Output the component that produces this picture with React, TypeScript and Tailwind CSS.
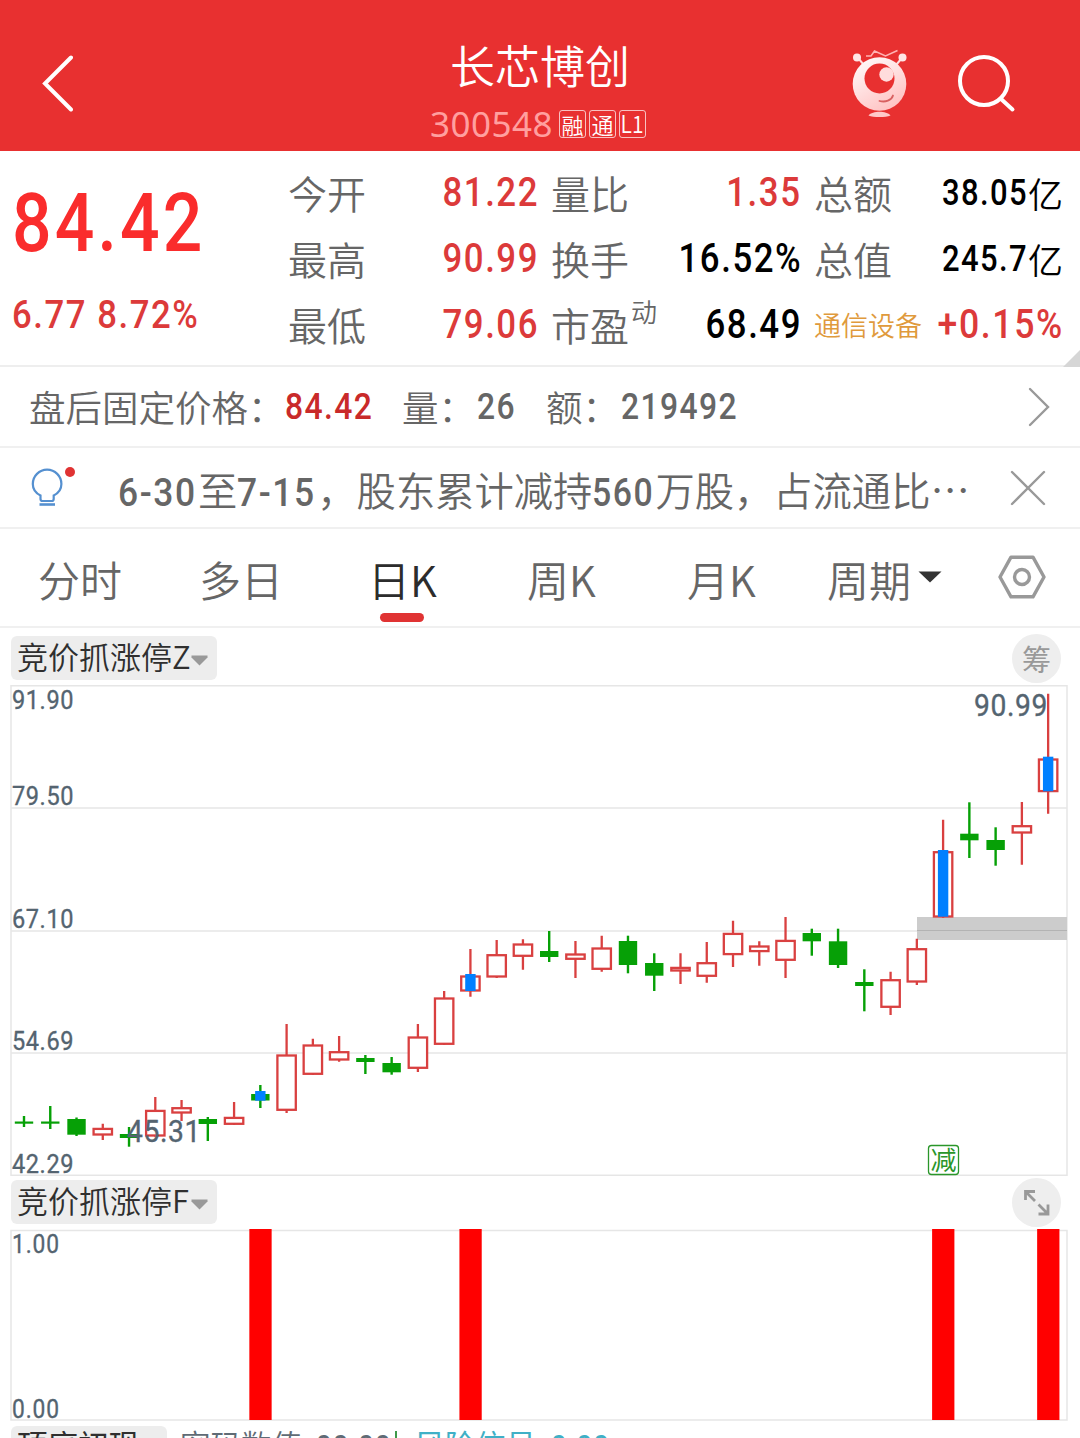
import clsx from "clsx";
import type { ReactNode } from "react";

type Quote = { label: string; value: string; sup?: string; tone?: "up" | "flat"; unit?: string };

const quotes: Quote[] = [
  { label: "今开", value: "81.22", tone: "up" },
  { label: "量比", value: "1.35", tone: "up" },
  { label: "总额", value: "38.05", unit: "亿" },
  { label: "最高", value: "90.99", tone: "up" },
  { label: "换手", value: "16.52%" },
  { label: "总值", value: "245.7", unit: "亿" },
  { label: "最低", value: "79.06", tone: "up" },
  { label: "市盈", sup: "动", value: "68.49" },
];

// [up?, high, bodyTop, bodyBottom, low, signalTop?, signalBottom?]
type Candle = [number, number, number, number, number, number?, number?];

const candles: Candle[] = [
  [0, 1116, 1121.5, 1123.7, 1127],
  [0, 1106, 1121.5, 1123.7, 1129],
  [0, 1117.5, 1119, 1134.7, 1136],
  [1, 1123.7, 1127.7, 1135.7, 1140],
  [0, 1127, 1134, 1138, 1146.7],
  [1, 1097, 1109.7, 1136.7, 1136.7],
  [1, 1100, 1107, 1113.7, 1121],
  [0, 1117, 1119, 1124, 1141],
  [1, 1102, 1116.7, 1125, 1125],
  [0, 1085, 1094, 1100.5, 1108, 1091, 1100.7],
  [1, 1024, 1054.3, 1111, 1113],
  [1, 1038.7, 1044.3, 1075, 1075],
  [1, 1036, 1051, 1060.7, 1061.7],
  [0, 1055, 1058, 1062, 1074],
  [0, 1057, 1063, 1072.3, 1074.7],
  [1, 1024, 1036.3, 1069, 1072],
  [1, 991, 997.3, 1045, 1045],
  [1, 949, 975.3, 991.7, 996.7, 974, 991],
  [1, 940, 954, 977.7, 978],
  [1, 939.3, 943.3, 957, 969.7],
  [0, 931, 951, 957, 962],
  [1, 941, 953.3, 960, 978],
  [1, 935.7, 947.3, 970, 971.7],
  [0, 935.7, 941, 965, 973.3],
  [0, 953.3, 963, 975.7, 991],
  [1, 953.3, 966.7, 971.7, 984],
  [1, 942, 962, 977, 982.7],
  [1, 920.7, 932.7, 955.3, 967],
  [1, 941.3, 945.3, 952.3, 965.7],
  [1, 917, 939.7, 961, 978],
  [0, 928.7, 933, 941.3, 955.7],
  [0, 928.7, 941.3, 965, 968],
  [0, 969.3, 982, 986, 1011.3],
  [1, 971.7, 979, 1008, 1015],
  [1, 938.7, 948, 982.7, 985],
  [1, 819.7, 851, 917.7, 917.7, 850, 916.7],
  [0, 802.3, 833.7, 840.3, 858],
  [0, 827.3, 840, 850, 865.7],
  [1, 802, 825, 833.7, 864.7],
  [1, 693.7, 758.3, 792.3, 813.7, 756.7, 791.3],
];

const axis = [
  { text: "91.90", y: 708.5 },
  { text: "79.50", y: 805.3 },
  { text: "67.10", y: 928 },
  { text: "54.69", y: 1050.3 },
  { text: "42.29", y: 1173 },
];

const candleX = (i: number) => 24 + i * 26.26;

function Num({ children, className }: { children: ReactNode; className?: string }) {
  return (
    <span
      className={clsx(
        "inline-block whitespace-pre font-['Roboto'] font-medium leading-none tracking-[0.045em]",
        className,
      )}
    >
      {children}
    </span>
  );
}

function Header() {
  return (
    <header className="flex h-[151px] items-start justify-between bg-[#e83030] text-white">
      <div className="w-[250px] pl-[41px] pt-[55px]">
        <svg width="32" height="57" viewBox="0 0 32 57" fill="none" stroke="#fff" strokeWidth="4">
          <path d="M30 2.500 4 28.500 30 54.500" strokeLinecap="round" />
        </svg>
      </div>
      <div className="flex flex-col items-center pt-[42px]">
        <h1 className="text-[45px] font-[350] leading-[45px]">长芯博创</h1>
        <div className="mr-[4px] mt-[19px] flex items-center gap-[3px]">
          <span className="mr-[4px] w-[122px] font-['Noto_Sans'] text-[35px] font-normal leading-[36px] tracking-[0.5px] text-[#ff9f9f]">
            300548
          </span>
          <span className="flex h-[28px] w-[27px] items-center justify-center rounded-[3px] border border-white/70 text-[22px] leading-[22px]">
            融
          </span>
          <span className="flex h-[28px] w-[27px] items-center justify-center rounded-[3px] border border-white/70 text-[22px] leading-[22px]">
            通
          </span>
          <span className="flex h-[28px] w-[27px] items-center justify-center rounded-[3px] border border-white/70 text-[24px] leading-[22px]">
            <span className="-mt-[2px] scale-x-[0.88]">L1</span>
          </span>
        </div>
      </div>
      <div className="flex w-[250px] gap-[48px] pl-[21px] pt-[48px]">
        <svg width="58" height="71" viewBox="0 0 58 71" fill="none">
          <defs>
            <linearGradient id="ball" x1="0" y1="0" x2="0.6" y2="1">
              <stop offset="0" stopColor="#fff" />
              <stop offset="1" stopColor="#ffc4c4" />
            </linearGradient>
          </defs>
          <path d="M15 8h5l3.500-5 11 5 12-5.500" stroke="#ffb3b3" strokeWidth="1.500" />
          <path d="M7 10l6 7M51 10l-6 7" stroke="#ffdede" strokeWidth="2" />
          <circle cx="6" cy="9.500" r="4" fill="#ffe6e6" />
          <circle cx="51.500" cy="9.500" r="4" fill="#ffe6e6" />
          <circle cx="28.500" cy="36" r="26.800" fill="url(#ball)" />
          <circle cx="28.500" cy="30.500" r="15" fill="#e83030" />
          <circle cx="35.500" cy="26.500" r="7.200" fill="#ffdcdc" />
          <path d="M28.500 53c6 1.500 12-0.500 13.500-5.500" stroke="#d86060" strokeWidth="1.800" strokeLinecap="round" />
          <path d="M17.500 67.500c4-5 18-5 22 0-5 2-17 2-22 0Z" fill="#ffc9c9" />
        </svg>
        <svg className="mt-[5px]" width="62" height="62" viewBox="0 0 62 62" fill="none" stroke="#fff">
          <circle cx="27" cy="28" r="24" strokeWidth="4" />
          <path d="M43.500 45.500 55.500 56.500" strokeWidth="4" strokeLinecap="round" />
        </svg>
      </div>
    </header>
  );
}

function QuotePanel() {
  return (
    <section className="relative flex h-[216px] border-b-2 border-[#eeeeee] pl-[12px] pt-[8px]">
      <div className="w-[276px] pt-[23px]">
        <Num className="h-[82px] origin-left scale-x-[0.85] text-[82px] leading-[86px] text-[#fa2c2c]">84.42</Num>
        <Num className="mt-[32px] block origin-left scale-x-[0.89] text-[39px] text-[#dc3a3a]">6.77 8.72%</Num>
      </div>
      <div className="grid h-[198px] grid-cols-[249px_249px_247px] gap-x-[14px]">
        {quotes.map((q) => (
          <div key={q.label} className="flex h-[66px] items-center justify-between">
            <span className="relative text-[39px] leading-[39px] text-[#666]">
              {q.label}
              {q.sup && <sup className="absolute left-[80px] top-[-7px] text-[26px] leading-[26px]">{q.sup}</sup>}
            </span>
            {q.unit ? (
              <span className="-mr-[2px] flex items-center text-black">
                <Num className="mt-[2px] origin-right scale-x-[0.86] text-[36px]">{q.value}</Num>
                <span className="text-[35px] leading-[35px]">{q.unit}</span>
              </span>
            ) : (
              <Num
                className={clsx(
                  "-mr-[2px] mt-[2px] origin-right scale-x-[0.87] text-[40px]",
                  q.tone === "up" ? "text-[#dc3a3a]" : "text-black",
                )}
              >
                {q.value}
              </Num>
            )}
          </div>
        ))}
        <div className="flex h-[66px] items-center justify-between whitespace-nowrap">
          <span className="w-[108px] text-[27px] leading-[27px] text-[#e09a3c]">通信设备</span>
          <Num className="-ml-[10px] -mr-[3px] mt-[2px] origin-right scale-x-[0.89] text-[40px] text-[#dc3a3a]">
            +0.15%
          </Num>
        </div>
      </div>
      <svg className="absolute bottom-[-2px] right-0" width="17" height="17" viewBox="0 0 17 17">
        <path d="M17 0V17H0Z" fill="#d6d6d6" />
      </svg>
    </section>
  );
}

function AfterHours() {
  return (
    <section className="flex h-[81px] items-center border-b-2 border-[#f0f0f0] pl-[29px] text-[36.5px] leading-[40px] text-[#666]">
      <span className="w-[256px]">盘后固定价格：</span>
      <Num className="w-[117px] origin-left scale-x-[0.86] text-[37px] text-[#c92a2a]">84.42</Num>
      <span className="w-[75px]">量：</span>
      <Num className="w-[69px] origin-left scale-x-[0.86] text-[37px]">26</Num>
      <span className="w-[75px]">额：</span>
      <Num className="origin-left scale-x-[0.86] text-[37px]">219492</Num>
      <svg className="ml-auto mr-[30px]" width="22" height="40" viewBox="0 0 22 40" fill="none" stroke="#999" strokeWidth="2.4">
        <path d="M2 2 20 20 2 38" strokeLinecap="round" />
      </svg>
    </section>
  );
}

function NewsBar() {
  return (
    <section className="flex h-[81px] items-center border-b-2 border-[#f0f0f0] text-[#666]">
      <svg className="ml-[30px]" width="48" height="44" viewBox="0 0 48 44" fill="none" stroke="#5590d0" strokeWidth="2.200">
        <path d="M10.500 33v-3.500C5.500 27 2.800 22.500 2.800 18a14.300 14.300 0 0 1 28.600 0c0 4.500-2.700 9-7.700 11.500V33c0 2-1 2-2 2H12.500c-1 0-2 0-2-2Z" />
        <path d="M9.500 38.500h15.500" strokeWidth="2.600" />
        <circle cx="40" cy="6" r="5" fill="#e03333" stroke="none" />
      </svg>
      <p className="ml-[40px] w-[870px] whitespace-nowrap pt-[6px] font-['Roboto','Noto_Sans_CJK_SC',sans-serif] text-[39.3px] leading-[44px]">
        <Num className="w-[80px] origin-left scale-x-[0.9]">6-30</Num>至
        <Num className="w-[80px] origin-left scale-x-[0.9]">7-15</Num>，股东累计减持
        <Num className="w-[63px] origin-left scale-x-[0.86]">560</Num>万股，占流通比
        <span className="font-['Noto_Sans_CJK_SC']">⋯</span>
      </p>
      <svg className="ml-auto mr-[33px]" width="38" height="38" viewBox="0 0 38 38" fill="none" stroke="#999" strokeWidth="2.4">
        <path d="M3 3 35 35M35 3 3 35" strokeLinecap="round" />
      </svg>
    </section>
  );
}

function PeriodTabs() {
  return (
    <nav className="flex h-[99px] items-center border-b-2 border-[#f0f0f0] pl-[38px] pt-[2px] text-[42px] leading-[48px] text-[#666]">
      <span className="w-[161px]">分时</span>
      <span className="w-[169px]">多日</span>
      <span className="relative w-[159px] text-[#2c2c2c]">
        日K
        <i className="absolute left-[12px] top-[58px] h-[9px] w-[44px] rounded-full bg-[#e03333]" />
      </span>
      <span className="w-[160px]">周K</span>
      <span className="w-[140px]">月K</span>
      <span>周期</span>
      <svg className="-mt-[4px] ml-[7px]" width="24" height="12" viewBox="0 0 24 12">
        <path d="M0.500 0.500h23L12 11.500Z" fill="#333" />
      </svg>
      <svg
        className="-mt-[3px] ml-auto mr-[34px]"
        width="48"
        height="44"
        viewBox="0 0 48 44"
        fill="none"
        stroke="#999"
        strokeWidth="3.4"
        strokeLinejoin="round"
      >
        <path d="M13 2.200H35L46 22 35 41.800H13L2 22Z" />
        <circle cx="24" cy="22" r="7.500" />
      </svg>
    </nav>
  );
}

function IndicatorChip({ name }: { name: string }) {
  return (
    <div className="flex h-[44px] w-[206px] items-center rounded-md bg-[#ededed] pl-[6px] text-[31px] leading-[31px] text-[#2f2f2f]">
      <span className="-mt-[6px] w-[174px] whitespace-nowrap">{name}</span>
      <svg className="mt-[4px]" width="17" height="11" viewBox="0 0 17 11">
        <path d="M0.500 0.500h16v2L8.500 10.500 0.500 2.500Z" fill="#999" />
      </svg>
    </div>
  );
}

function KlineChart() {
  return (
    <svg className="block" width="1080" height="492" viewBox="0 685 1080 492">
      <g stroke="#e6e6e6" strokeWidth="1.500" fill="none">
        <rect x="11" y="685.750" width="1056" height="489.500" />
        <path d="M11 808H1067M11 931H1067M11 1053H1067" />
      </g>
      <rect x="917" y="917" width="150" height="23" fill="#cccccc" />
      <path d="M917 930.500H1067" stroke="#b3b3b3" />
      {candles.map(([up, high, top, bottom, low, sigTop, sigBottom], i) => {
        const x = candleX(i);
        return (
          <g key={i}>
            {up ? (
              <g stroke="#d94040" strokeWidth="2.300" fill="none">
                <path d={`M${x} ${high}V${top + 1}M${x} ${bottom - 1}V${low}`} />
                <rect x={x - 9.2} y={top + 1.2} width="18.400" height={bottom - top - 2.4} fill="#fff" />
              </g>
            ) : (
              <g fill="#06a006">
                <rect x={x - 1.2} y={high} width="2.400" height={low - high} />
                <rect x={x - 9.2} y={top} width="18.400" height={bottom - top} />
              </g>
            )}
            {sigTop && sigBottom && (
              <rect x={x - 5.2} y={sigTop} width="10.400" height={sigBottom - sigTop} fill="#0080ff" />
            )}
          </g>
        );
      })}
      <g
        fill="#546470"
        stroke="#546470"
        strokeWidth="0.350"
        className="font-['Roboto'] font-normal tracking-[0.04em]"
      >
        {axis.map((a) => (
          <text key={a.text} x="12" y={a.y} fontSize="26" textLength="62" lengthAdjust="spacingAndGlyphs">
            {a.text}
          </text>
        ))}
        <text x="127" y="1142" fontSize="30.500" textLength="74" lengthAdjust="spacingAndGlyphs">45.31</text>
        <text x="974" y="716" fontSize="30.500" textLength="74" lengthAdjust="spacingAndGlyphs">90.99</text>
      </g>
      <rect x="928.500" y="1145.500" width="30" height="29" rx="3" fill="#fff" stroke="#2a962a" strokeWidth="1.300" />
      <text x="943.500" y="1169.500" fontSize="26" textAnchor="middle" fill="#2a962a" className="font-normal">减</text>
    </svg>
  );
}

function SignalChart() {
  return (
    <svg className="block" width="1080" height="193" viewBox="0 1229 1080 193">
      <rect x="11" y="1230.500" width="1056" height="189.500" fill="none" stroke="#e6e6e6" strokeWidth="1.500" />
      {[9, 17, 35, 39].map((i) => (
        <rect key={i} x={candleX(i) - 11} y="1229" width="22.300" height="191" fill="#ff0000" />
      ))}
      <g
        fill="#546470"
        stroke="#546470"
        strokeWidth="0.350"
        fontSize="26"
        className="font-['Roboto'] font-normal tracking-[0.04em]"
      >
        <text x="12" y="1252.500" textLength="48" lengthAdjust="spacingAndGlyphs">1.00</text>
        <text x="12" y="1417.500" textLength="48" lengthAdjust="spacingAndGlyphs">0.00</text>
      </g>
    </svg>
  );
}

export default function App() {
  return (
    <main className="h-[1438px] w-[1080px] overflow-hidden bg-white font-['Noto_Sans_CJK_SC',sans-serif] font-[350]">
      <Header />
      <QuotePanel />
      <AfterHours />
      <NewsBar />
      <PeriodTabs />

      <div className="flex h-[57px] items-start justify-between pl-[11px] pr-[19px] pt-[6px]">
        <div className="pt-[2px]">
          <IndicatorChip name="竞价抓涨停Z" />
        </div>
        <div className="flex h-[49px] w-[49px] items-center justify-center rounded-full bg-[#eeeeee] text-[29px] font-normal leading-[29px] text-[#999]">
          筹
        </div>
      </div>
      <KlineChart />

      <div className="flex h-[52px] items-start justify-between pl-[11px] pr-[19px] pt-[1px]">
        <div className="pt-[2px]">
          <IndicatorChip name="竞价抓涨停F" />
        </div>
        <div className="flex h-[49px] w-[49px] items-center justify-center rounded-full bg-[#eeeeee]">
          <svg width="27" height="27" viewBox="0 0 27 27" fill="none" stroke="#999" strokeWidth="2.800">
            <path d="M2.500 11V2.500H12M3 3 12 12" />
            <path d="M15.500 25H25V15.500M15.500 15.500 24.500 24.500" />
          </svg>
        </div>
      </div>
      <SignalChart />

      <div className="flex items-start whitespace-nowrap pl-[11px] pt-[4px] text-[30.5px] leading-[44px] text-[#5f6b75]">
        <div className="mr-[13px] h-[44px] w-[156px] rounded-md bg-[#ededed] pl-[6px] font-normal leading-[36px] text-[#2f2f2f]">
          顶底初现
        </div>
        <span className="leading-[36px]">密码数值:</span>
        <Num className="ml-[6px] w-[79px] origin-left scale-x-[0.91] pt-[5px] text-[30px]">00.00</Num>
        <i className="mt-[5px] h-[30px] w-[2px] bg-[#3f9a4a]" />
        <span className="ml-[17px] font-normal leading-[36px] text-[#3fb0c6]">风险信号:</span>
        <Num className="ml-[6px] origin-left scale-x-[0.91] pt-[5px] text-[30px] text-[#3fb0c6]">0.00</Num>
      </div>
    </main>
  );
}
